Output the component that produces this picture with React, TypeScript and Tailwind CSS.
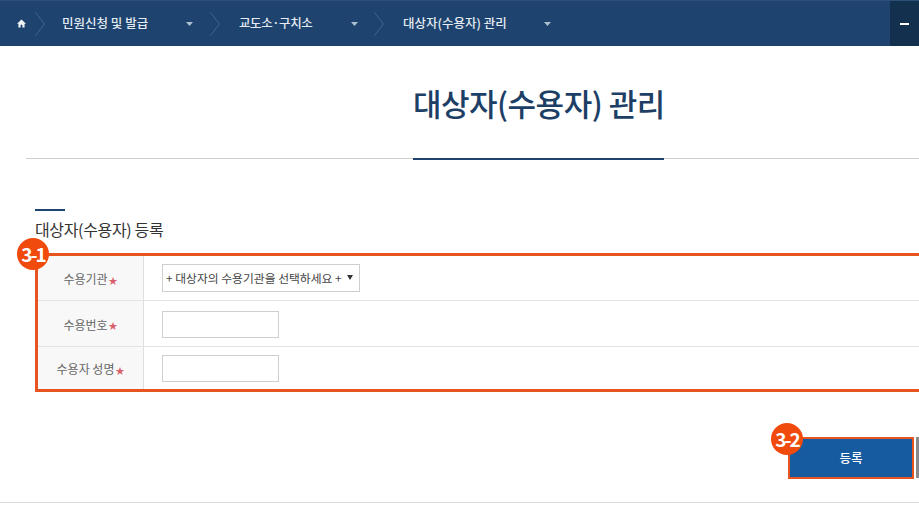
import React from 'react';

const font = 'font-["Noto_Sans_CJK_KR","Noto_Sans",sans-serif]';

function Crumb({ label, width, gap, caret }: { label: string; width: string; gap: string; caret: string }) {
  return (
    <div className={`flex items-center ${width}`}>
      <svg width="10" height="24" viewBox="0 0 10 24" fill="none" className="shrink-0">
        <path d="M0.5 0.5 L9.5 12 L0.5 23.5" stroke="#4a7099" strokeWidth="0.8" />
      </svg>
      <span className={`${gap} text-[12.5px] font-medium text-[#e4ebf2] whitespace-nowrap`}>{label}</span>
      <svg width="7" height="4" viewBox="0 0 7 4" className={`ml-auto ${caret} shrink-0`}>
        <path d="M0 0 H7 L3.5 4 Z" fill="#aebfd0" />
      </svg>
    </div>
  );
}

function Row({ label, height, children, border = true }: { label: string; height: string; children: React.ReactNode; border?: boolean }) {
  return (
    <div className={`flex ${height} ${border ? 'border-b border-[#e3e3e3]' : ''}`}>
      <div className="w-[106px] shrink-0 flex items-center justify-center pt-[2px] bg-[#f8f8f8] border-r border-[#dedede] text-[12px] text-[#666]">
        {label}
        <span className="text-[#d9606a] text-[9px] ml-[1px] mt-[3px]">★</span>
      </div>
      <div className="flex items-center pl-[18px]">{children}</div>
    </div>
  );
}

export default function App() {
  return (
    <div className={`w-[919px] h-[507px] overflow-hidden bg-white ${font}`}>
      {/* breadcrumb bar */}
      <div className="h-[46px] bg-[#1d436e] border-t border-[#2d5079] flex items-center">
        <div className="w-[35px] flex pl-[17px]">
          <svg width="9" height="9" viewBox="0 0 10 10">
            <path d="M5 0.5 L10 5.2 H8.4 V9.5 H6 V6.5 H4 V9.5 H1.6 V5.2 H0 Z" fill="#f1f4f7" />
          </svg>
        </div>
        <Crumb label="민원신청 및 발급" width="w-[175px]" gap="ml-[17px]" caret="mr-[17px]" />
        <Crumb label="교도소·구치소" width="w-[164px]" gap="ml-[19px] tracking-[-0.4px]" caret="mr-[16px]" />
        <Crumb label="대상자(수용자) 관리" width="w-[182px]" gap="ml-[19px]" caret="mr-[5px]" />
        <div className="ml-auto w-[29px] h-full bg-[#14304f] flex items-center justify-center">
          <div className="w-[9px] h-[2px] bg-white" />
        </div>
      </div>

      {/* page title */}
      <div className="pl-[26px] w-[960px]">
        <div className="border-b border-[#cfcfcf] h-[113px]">
          <h1 className="ml-[387px] w-[251px] h-[114px] border-b-2 border-[#1d436e] text-center text-[31px] font-medium text-[#1d3f66] leading-[46px] pt-[34px] tracking-[-0.5px] whitespace-nowrap">
            대상자(수용자) 관리
          </h1>
        </div>
      </div>

      {/* form */}
      <div className="pl-[35px] pt-[50px] w-[1000px]">
        <div className="w-[30px] h-[2px] bg-[#1d436e]" />
        <h2 className="mt-[8px] text-[16px] leading-[20px] text-[#333] tracking-[-0.35px]">대상자(수용자) 등록</h2>
        <div className="relative mt-[14px] border-[3px] border-[#e8541f] w-[960px] h-[139px]">
          <div className="absolute -left-[21px] -top-[18px] w-[32px] h-[32px] rounded-full bg-[#f04a0c] text-white text-[19px] font-bold flex items-center justify-center tracking-[-2px]">
            3-1
          </div>
          <Row label="수용기관" height="h-[45px]">
            <div className="w-[198px] h-[28px] border border-[#cfcfcf] bg-white flex items-center justify-between pl-[3px] pr-[6px] text-[11.8px] text-[#444] whitespace-nowrap">
              <span>+ 대상자의 수용기관을 선택하세요 +</span>
              <svg width="6" height="5" viewBox="0 0 6 5" className="mb-[2px]">
                <path d="M0 0 H6 L3 5 Z" fill="#333" />
              </svg>
            </div>
          </Row>
          <Row label="수용번호" height="h-[46px]">
            <div className="w-[117px] h-[27px] mt-[1px] border border-[#cfcfcf] bg-white" />
          </Row>
          <Row label="수용자 성명" height="h-[42px]" border={false}>
            <div className="w-[117px] h-[27px] mt-[1px] border border-[#cfcfcf] bg-white" />
          </Row>
        </div>
      </div>

      {/* buttons */}
      <div className="flex pl-[788px] mt-[45px] gap-[2px] w-[1000px]">
        <div className="relative w-[126px] h-[42px] border-[2px] border-[#e8541f] bg-[#165a9f] flex items-center justify-center text-[12.5px] font-medium text-white">
          등록
          <div className="absolute -left-[19px] -top-[16px] w-[32px] h-[32px] rounded-full bg-[#f04a0c] text-white text-[19px] font-bold flex items-center justify-center tracking-[-2px]">
            3-2
          </div>
        </div>
        <div className="w-[60px] h-[41px] bg-[#8a8a8a]" />
      </div>

      <div className="mt-[23px] h-px bg-[#d9d9d9]" />
    </div>
  );
}
